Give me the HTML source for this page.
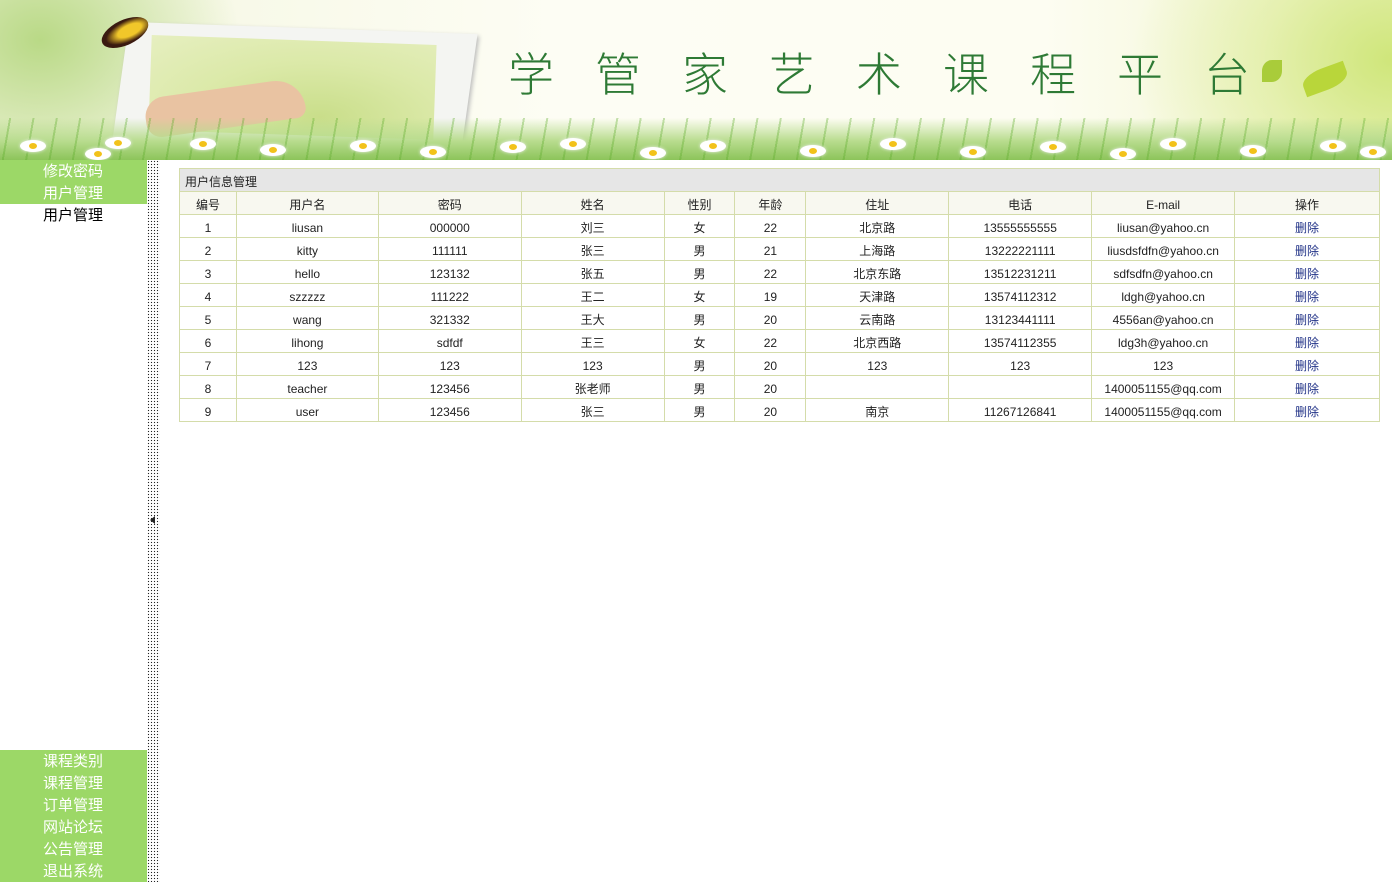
<!DOCTYPE html>
<html><head><meta charset="utf-8">
<style>
*{margin:0;padding:0;box-sizing:border-box}
html,body{width:1392px;height:882px;overflow:hidden;background:#fff;font-family:"Liberation Sans","Noto Sans CJK SC",sans-serif}
#hd{position:absolute;left:0;top:0;width:1392px;height:160px;overflow:hidden;
background:radial-gradient(ellipse 260px 200px at 1392px 60px,#cfe67a 0%,rgba(220,236,150,.6) 50%,rgba(255,255,240,0) 100%),
radial-gradient(ellipse 200px 160px at 40px 40px,#b9d986 0%,rgba(240,245,220,0) 100%),
linear-gradient(90deg,#f4f6e0 0%,#fdfdf4 40%,#fdfdf2 75%,#eef3c8 100%)}
#frame{position:absolute;left:120px;top:28px;width:350px;height:118px;background:#f4f5f2;transform:skewX(-6deg) rotate(2deg);box-shadow:2px 2px 4px #bbb}
#photo{position:absolute;left:150px;top:40px;width:285px;height:95px;background:radial-gradient(ellipse at 60% 80%,#c9de8a,#dbe9a8 50%,#e6efc0);transform:rotate(2deg)}
#hand{position:absolute;left:145px;top:88px;width:160px;height:40px;border-radius:40px 60px 20px 30px;background:#e9c3a2;transform:rotate(-8deg)}
#grass{position:absolute;left:0;top:118px;width:1392px;height:42px;
background:repeating-linear-gradient(100deg,rgba(90,170,40,0) 0 9px,rgba(90,170,40,.35) 9px 11px,rgba(90,170,40,0) 11px 23px),
linear-gradient(180deg,rgba(160,210,110,0) 0%,#b8dc8e 55%,#8cc45a 100%)}
.dz{position:absolute;width:26px;height:12px;border-radius:50%;background:#fff;box-shadow:0 0 3px #eee}
.dz:after{content:"";position:absolute;left:9px;top:3px;width:8px;height:6px;border-radius:50%;background:#f2c21a}
#title{position:absolute;left:508px;top:44px;font-size:46px;line-height:56px;color:#2e7a35;letter-spacing:41px;font-weight:300;white-space:nowrap;font-family:"Noto Sans CJK SC",sans-serif}
#leaf{position:absolute;left:1302px;top:68px;width:46px;height:22px;border-radius:50% 0;background:#b9d63a;transform:rotate(-20deg)}
#leaf2{position:absolute;left:1262px;top:60px;width:20px;height:22px;border-radius:50% 0;background:#a9cc3a}
#bf{position:absolute;left:100px;top:20px;width:50px;height:25px;background:radial-gradient(ellipse at 60% 50%,#f1c72a 30%,#3a1a10 60%);border-radius:50%;transform:rotate(-25deg)}
#sb{position:absolute;left:0;top:160px;width:147px;height:722px}
.g{background:#9cd867;color:#fff}
.it{height:22px;line-height:24px;font-size:15px;padding-left:43px}
.bk{color:#000}
#dots{position:absolute;left:147px;top:160px;width:13px;height:722px;background-image:radial-gradient(circle,#222 0.7px,transparent 0.8px);background-size:3px 3px}
#arr{position:absolute;left:150px;top:516px;width:0;height:0;border-top:4px solid transparent;border-bottom:4px solid transparent;border-right:5px solid #222}
table{position:absolute;left:179px;top:168px;width:1201px;border-collapse:collapse;font-size:12px;color:#222}
td{border:1px solid #d4dcaa;height:23px;line-height:14px;padding:3px 0 0 0;text-align:center;vertical-align:middle}
.cap td{background:#e6e6e6;text-align:left;padding-left:5px}
.th td{background:#f8f8f0}
a{color:#223388;text-decoration:none}
</style></head><body>
<div id="hd">
<div id="frame"></div><div id="photo"></div><div id="hand"></div>
<div id="bf"></div>
<div id="grass"></div>
<div class="dz" style="left:20px;top:140px"></div><div class="dz" style="left:85px;top:148px"></div>
<div class="dz" style="left:105px;top:137px"></div><div class="dz" style="left:190px;top:138px"></div>
<div class="dz" style="left:260px;top:144px"></div><div class="dz" style="left:350px;top:140px"></div>
<div class="dz" style="left:420px;top:146px"></div><div class="dz" style="left:500px;top:141px"></div>
<div class="dz" style="left:560px;top:138px"></div><div class="dz" style="left:640px;top:147px"></div>
<div class="dz" style="left:700px;top:140px"></div><div class="dz" style="left:800px;top:145px"></div>
<div class="dz" style="left:880px;top:138px"></div><div class="dz" style="left:960px;top:146px"></div>
<div class="dz" style="left:1040px;top:141px"></div><div class="dz" style="left:1110px;top:148px"></div>
<div class="dz" style="left:1160px;top:138px"></div><div class="dz" style="left:1240px;top:145px"></div>
<div class="dz" style="left:1320px;top:140px"></div><div class="dz" style="left:1360px;top:146px"></div>
<div id="title">学管家艺术课程平台</div>
<div id="leaf2"></div><div id="leaf"></div>
</div>
<div id="sb">
<div class="g it">修改密码</div>
<div class="g it">用户管理</div>
<div class="it bk">用户管理</div>
<div style="position:absolute;top:590px;left:0;width:147px;height:132px" class="g">
<div class="it">课程类别</div><div class="it">课程管理</div><div class="it">订单管理</div><div class="it">网站论坛</div><div class="it">公告管理</div><div class="it">退出系统</div>
</div>
</div>
<div id="dots"></div><div id="arr"></div>
<table>
<colgroup><col style="width:57px"><col style="width:142px"><col style="width:143px"><col style="width:143px"><col style="width:71px"><col style="width:71px"><col style="width:143px"><col style="width:143px"><col style="width:143px"><col style="width:145px"></colgroup>
<tr class="cap"><td colspan="10">用户信息管理</td></tr>
<tr class="th"><td>编号</td><td>用户名</td><td>密码</td><td>姓名</td><td>性别</td><td>年龄</td><td>住址</td><td>电话</td><td>E-mail</td><td>操作</td></tr>
<tr><td>1</td><td>liusan</td><td>000000</td><td>刘三</td><td>女</td><td>22</td><td>北京路</td><td>13555555555</td><td>liusan@yahoo.cn</td><td><a>删除</a></td></tr>
<tr><td>2</td><td>kitty</td><td>111111</td><td>张三</td><td>男</td><td>21</td><td>上海路</td><td>13222221111</td><td>liusdsfdfn@yahoo.cn</td><td><a>删除</a></td></tr>
<tr><td>3</td><td>hello</td><td>123132</td><td>张五</td><td>男</td><td>22</td><td>北京东路</td><td>13512231211</td><td>sdfsdfn@yahoo.cn</td><td><a>删除</a></td></tr>
<tr><td>4</td><td>szzzzz</td><td>111222</td><td>王二</td><td>女</td><td>19</td><td>天津路</td><td>13574112312</td><td>ldgh@yahoo.cn</td><td><a>删除</a></td></tr>
<tr><td>5</td><td>wang</td><td>321332</td><td>王大</td><td>男</td><td>20</td><td>云南路</td><td>13123441111</td><td>4556an@yahoo.cn</td><td><a>删除</a></td></tr>
<tr><td>6</td><td>lihong</td><td>sdfdf</td><td>王三</td><td>女</td><td>22</td><td>北京西路</td><td>13574112355</td><td>ldg3h@yahoo.cn</td><td><a>删除</a></td></tr>
<tr><td>7</td><td>123</td><td>123</td><td>123</td><td>男</td><td>20</td><td>123</td><td>123</td><td>123</td><td><a>删除</a></td></tr>
<tr><td>8</td><td>teacher</td><td>123456</td><td>张老师</td><td>男</td><td>20</td><td></td><td></td><td>1400051155@qq.com</td><td><a>删除</a></td></tr>
<tr><td>9</td><td>user</td><td>123456</td><td>张三</td><td>男</td><td>20</td><td>南京</td><td>11267126841</td><td>1400051155@qq.com</td><td><a>删除</a></td></tr>
</table>
</body></html>
